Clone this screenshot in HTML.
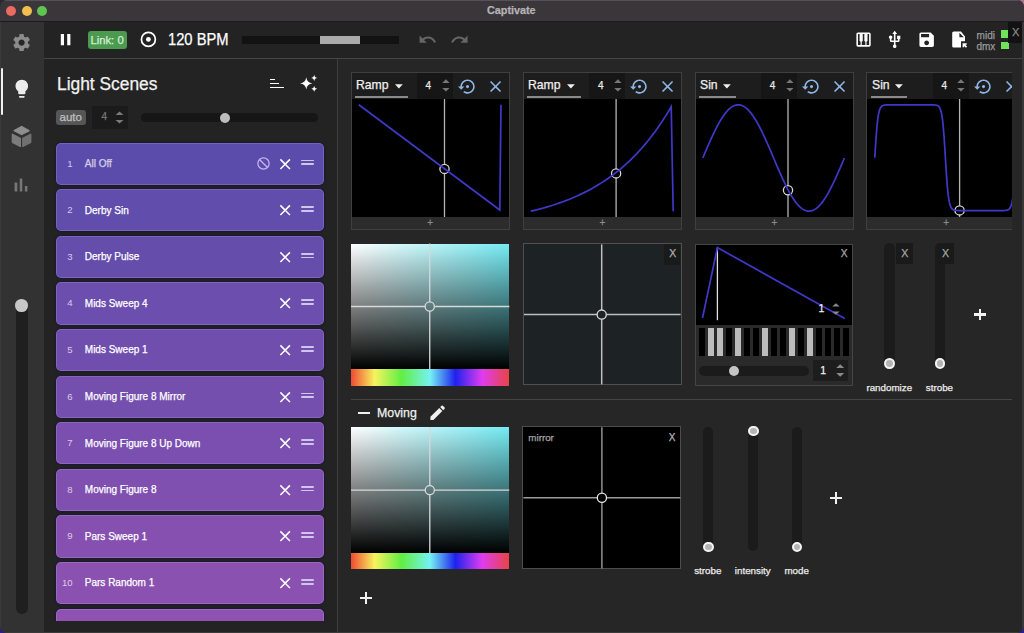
<!DOCTYPE html>
<html><head><meta charset="utf-8">
<style>
*{box-sizing:border-box;margin:0;padding:0}
html,body{width:1024px;height:633px;overflow:hidden;background:#2a1d6e}
body{font-family:"Liberation Sans",sans-serif;position:relative;color:#fff}
.a{position:absolute}
svg.a{overflow:visible}
#win{position:absolute;left:0;top:0;width:1024px;height:633px;background:#262626;border-radius:7px;overflow:hidden}
#title{left:0;top:0;width:1024px;height:22px;background:#3a363a}
.tl{width:10px;height:10px;border-radius:50%;top:5.6px}
#side{left:0;top:22px;width:44px;height:611px;background:#323232}
#toolbar{left:44px;top:22px;width:980px;height:36px;background:#232323}
#tbline{left:44px;top:58px;width:980px;height:1px;background:#454545}
#left{left:44px;top:59px;width:293px;height:574px;background:#232323}
#vline{left:337px;top:59px;width:1px;height:574px;background:#3d3d3d}
#list{position:absolute;left:0;top:0;width:337px;height:620.5px;overflow:hidden}
.card{position:absolute;left:56px;width:268.3px;height:42.3px;border-radius:5px;box-shadow:inset 0 0 0 1px rgba(230,225,255,.17),0 0 2px 1px rgba(20,12,70,.45)}
.num{position:absolute;left:0;width:16.6px;text-align:right;top:16px;font-size:9.6px;line-height:1;color:rgba(255,255,255,.72)}
.nm{position:absolute;left:28.8px;top:16.5px;font-size:10px;line-height:1;color:#fff;white-space:nowrap}
.blk{position:absolute;left:200px;top:13.4px;width:15px;height:15px}
.cls{position:absolute;left:219.9px;top:12px;width:18.3px;height:18.3px}
.dr{position:absolute;left:244.9px;width:13.5px;height:1.8px;background:#cfc5ee;border-radius:1px}
.txt{white-space:nowrap;line-height:1}
.nm,.txt{-webkit-text-stroke:0.25px currentColor}
#rclip{position:absolute;left:338px;top:59px;width:674px;height:574px;overflow:hidden}
#rin{position:absolute;left:-338px;top:-59px;width:1024px;height:633px}
.wp{position:absolute;top:71.8px;width:159.3px;height:157.8px;border:1px solid #3f3f3f}
</style></head><body>
<div class="a" style="left:0;top:0;width:20px;height:20px;background:#2a2a2e"></div>
<div class="a" style="left:1004px;top:0;width:20px;height:20px;background:#b07090"></div>
<div class="a" style="left:0;top:613px;width:20px;height:20px;background:#2c1c90"></div>
<div class="a" style="left:1004px;top:613px;width:20px;height:20px;background:#2a1aa0"></div>
<div id="win">
  <div id="title" class="a"></div>
  <div class="a" style="left:0;top:0;width:1024px;height:1px;background:#55505a"></div>
  <div class="a" style="left:0;top:21px;width:1024px;height:1px;background:#1c1c1c"></div>
  <div class="a tl" style="left:5.6px;background:#ec6a5f"></div>
  <div class="a tl" style="left:21.6px;background:#f3bd4f"></div>
  <div class="a tl" style="left:37px;background:#60c453"></div>
  <div class="a txt" style="left:487px;top:5px;font-size:10.8px;font-weight:bold;color:#b5b1b5">Captivate</div>

  <div id="side" class="a"></div>
  <div id="toolbar" class="a"></div>
  <div id="tbline" class="a"></div>
  <div id="left" class="a"></div>
  <div id="vline" class="a"></div>

  <!-- sidebar icons -->
  <svg class="a" style="left:11.1px;top:31.6px;width:21.2px;height:21.2px" viewBox="0 0 24 24"><path fill="#8b8b8b" d="M19.14 12.94c.04-.3.06-.61.06-.94 0-.32-.02-.64-.07-.94l2.03-1.58c.18-.14.23-.41.12-.61l-1.92-3.32c-.12-.22-.37-.29-.59-.22l-2.39.96c-.5-.38-1.03-.7-1.62-.94l-.36-2.540c-.04-.24-.24-.41-.48-.41h-3.84c-.24 0-.43.17-.47.41l-.36 2.54c-.59.24-1.130.57-1.62.94l-2.39-.96c-.22-.08-.47 0-.59.22L2.74 8.87c-.12.21-.08.47.12.61l2.03 1.58c-.05.3-.09.63-.09.94s.02.64.07.94l-2.03 1.58c-.18.14-.23.41-.12.61l1.92 3.32c.12.22.37.29.59.22l2.39-.96c.5.38 1.03.7 1.62.94l.36 2.54c.05.24.24.41.48.41h3.84c.24 0 .44-.17.47-.41l.36-2.54c.59-.24 1.13-.56 1.62-.94l2.39.96c.22.08.47 0 .59-.22l1.92-3.32c.12-.22.07-.47-.12-.61l-2.01-1.58zM12 15.6c-1.98 0-3.6-1.62-3.6-3.6s1.62-3.6 3.6-3.6 3.6 1.62 3.6 3.6-1.62 3.6-3.6 3.6z"/></svg>
  <div class="a" style="left:19px;top:39.6px;width:5.4px;height:5.4px;background:#262626;border-radius:50%"></div>
  <div class="a" style="left:1px;top:68.4px;width:2.2px;height:47px;background:#f0f0f0;border-radius:1px"></div>
  <svg class="a" style="left:10.9px;top:78px;width:21.6px;height:21.6px" viewBox="0 0 24 24"><path fill="#ececec" d="M9 21c0 .55.45 1 1 1h4c.55 0 1-.45 1-1v-1H9v1zm3-19C8.14 2 5 5.14 5 9c0 2.38 1.19 4.47 3 5.74V17c0 .55.45 1 1 1h6c.55 0 1-.45 1-1v-2.26c1.81-1.27 3-3.36 3-5.74 0-3.86-3.14-7-7-7z"/></svg>
  <svg class="a" style="left:0;top:120px;width:44px;height:34px" viewBox="0 120 44 34">
    <path d="M14.3 130.6 L21.6 126.6 L28.9 130.7 L21.6 134.4 Z" fill="#8e8e8e" stroke="#8e8e8e" stroke-width="1.6" stroke-linejoin="round"/>
    <path d="M12.4 134.3 L20.3 138.3 L20.3 146.4 L12.4 142.3 Z" fill="#7b7b7b" stroke="#7b7b7b" stroke-width="1.4" stroke-linejoin="round"/>
    <path d="M30.7 134.3 L22.8 138.3 L22.8 146.4 L30.7 142.3 Z" fill="#717171" stroke="#717171" stroke-width="1.4" stroke-linejoin="round"/>
  </svg>
  <svg class="a" style="left:10.4px;top:173.8px;width:22px;height:22px" viewBox="0 0 24 24"><path fill="#767676" d="M5 9.2h3V19H5zM10.6 5h2.8v14h-2.8zm5.6 8H19v6h-2.8z"/></svg>
  <div class="a" style="left:15.8px;top:305px;width:11.8px;height:309px;background:#1f1f1f;border-radius:6px"></div>
  <div class="a" style="left:15.3px;top:299.4px;width:12.6px;height:12.6px;background:#c8c8c8;border-radius:50%"></div>

  <!-- toolbar -->
  <svg class="a" style="left:56.2px;top:30px;width:19.2px;height:19.2px" viewBox="0 0 24 24"><path fill="#fff" d="M6 19h4V5H6v14zm8-14v14h4V5h-4z"/></svg>
  <div class="a" style="left:88px;top:31.1px;width:38.5px;height:17.6px;background:#4b9a50;border-radius:3px"></div>
  <div class="a txt" style="left:90.4px;top:34.5px;font-size:11.3px;color:#d4efd2">Link: 0</div>
  <svg class="a" style="left:138px;top:29.3px;width:21px;height:21px" viewBox="138 29.3 21 21"><circle cx="148.4" cy="39.7" r="6.95" fill="none" stroke="#fff" stroke-width="1.75"/><circle cx="148.4" cy="39.7" r="2.4" fill="#fff"/></svg>
  <div class="a txt" style="left:168px;top:32.4px;font-size:16px;color:#fff;transform:scaleX(0.92);transform-origin:0 0">120 BPM</div>
  <div class="a" style="left:241.5px;top:36px;width:157.5px;height:8px;background:#121212"></div>
  <div class="a" style="left:320.3px;top:36px;width:39.6px;height:8px;background:#ababab"></div>
  <svg class="a" style="left:418.4px;top:30.3px;width:19.2px;height:19.2px" viewBox="0 0 24 24"><path fill="#666" d="M12.5 8c-2.65 0-5.05.99-6.9 2.6L2 7v9h9l-3.62-3.62c1.39-1.16 3.16-1.88 5.12-1.88 3.54 0 6.55 2.31 7.6 5.5l2.37-.78C21.08 11.03 17.150 8 12.5 8z"/></svg>
  <svg class="a" style="left:449.8px;top:30.3px;width:19.2px;height:19.2px" viewBox="0 0 24 24"><path fill="#666" d="M18.4 10.6C16.55 8.99 14.15 8 11.5 8c-4.65 0-8.58 3.03-9.96 7.22L3.9 16c1.05-3.19 4.05-5.5 7.6-5.5 1.95 0 3.73.72 5.12 1.88L13 16h9V7l-3.6 3.6z"/></svg>

  <svg class="a" style="left:853.9px;top:30.3px;width:19.1px;height:19.1px" viewBox="0 0 24 24"><path fill="#fff" d="M19,3H5C3.9,3,3,3.9,3,5v14c0,1.1,0.9,2,2,2h14c1.1,0,2-0.9,2-2V5C21,3.9,20.1,3,19,3z M14,14.5h0.25V19h-4.5v-4.5H10c0.55,0,1-0.45,1-1V5h2v8.5C13,14.05,13.45,14.5,14,14.5z M5,5h2v8.5c0,0.55,0.45,1,1,1h0.25V19H5V5z M19,19h-3.25v-4.5H16c0.55,0,1-0.45,1-1V5h2V19z"/></svg>
  <svg class="a" style="left:884.9px;top:30.2px;width:19.4px;height:19.4px" viewBox="0 0 24 24"><path fill="#fff" d="M15 7v4h1v2h-3V5h2l-3-4-3 4h2v8H8v-2.07c.7-.37 1.2-1.08 1.2-1.93 0-1.21-.99-2.2-2.2-2.2-1.21 0-2.2.99-2.2 2.2 0 .85.5 1.56 1.2 1.93V13c0 1.11.89 2 2 2h3v3.05c-.71.37-1.2 1.1-1.2 1.95 0 1.22.99 2.2 2.2 2.2 1.21 0 2.2-.98 2.2-2.2 0-.85-.49-1.58-1.2-1.95V15h3c1.11 0 2-.89 2-2v-2h1V7h-4z"/></svg>
  <svg class="a" style="left:916.9px;top:30.3px;width:19.3px;height:19.3px" viewBox="0 0 24 24"><path fill="#fff" d="M17 3H5c-1.11 0-2 .9-2 2v14c0 1.1.89 2 2 2h14c1.1 0 2-.9 2-2V7l-4-4zm-5 16c-1.66 0-3-1.34-3-3s1.34-3 3-3 3 1.34 3 3-1.34 3-3 3zm3-10H5V5h10v4z"/></svg>
  <svg class="a" style="left:948.5px;top:30.4px;width:19.2px;height:19.2px" viewBox="0 0 24 24"><path fill="#fff" d="M15,2H6C4.9,2,4,2.9,4,4v16c0,1.1,0.89,2,1.99,2H15v-8h5V8L15,2z M13,9V3.5L18.5,9H13z M17,21.66V16.5h5.16v2h-1.76l2.24,2.24l-1.41,1.41l-2.24-2.24v1.75H17z"/></svg>
  <div class="a txt" style="left:976.6px;top:30.8px;font-size:10px;color:#9a9a9a">midi</div>
  <div class="a txt" style="left:976.4px;top:41.6px;font-size:10px;color:#9a9a9a">dmx</div>
  <div class="a" style="left:1001px;top:30.4px;width:7px;height:7.4px;background:#6fe35a"></div>
  <div class="a" style="left:1001px;top:42px;width:8px;height:7px;background:#6fe35a"></div>
  <div class="a" style="left:1008px;top:22px;width:16px;height:20.5px;background:#121212"></div>
  <div class="a txt" style="left:1012px;top:27px;font-size:11px;color:#8a8a8a">X</div>

  <!-- left panel header -->
  <div class="a txt" style="left:56.6px;top:74.5px;font-size:18.3px;color:#f2f2f2;transform:scaleX(0.95);transform-origin:0 0">Light Scenes</div>
  <div class="a" style="left:270px;top:78.9px;width:4.8px;height:1.5px;background:#fff"></div>
  <div class="a" style="left:270px;top:82.6px;width:9.4px;height:1.5px;background:#fff"></div>
  <div class="a" style="left:270px;top:86.7px;width:14.2px;height:1.5px;background:#fff"></div>
  <svg class="a" style="left:298px;top:72px;width:22px;height:22px" viewBox="298 72 22 22">
    <path fill="#fff" d="M306.25 77.2 Q306.9 82.6 312.4 83.3 Q306.9 84 306.25 89.5 Q305.6 84 300.1 83.3 Q305.6 82.6 306.25 77.2Z"/>
    <path fill="#fff" d="M314.2 75.1 Q314.5 77.7 317.1 78 Q314.5 78.3 314.2 80.9 Q313.9 78.3 311.3 78 Q313.9 77.7 314.2 75.1Z"/>
    <path fill="#fff" d="M314.2 85.9 Q314.5 88.5 317.1 88.8 Q314.5 89.1 314.2 91.7 Q313.9 89.1 311.3 88.8 Q313.9 88.5 314.2 85.9Z"/>
  </svg>
  <div class="a" style="left:56.1px;top:110px;width:29.8px;height:14.5px;background:#565656;border-radius:3px"></div>
  <div class="a txt" style="left:59.5px;top:112px;font-size:11.5px;color:#c0c0c0">auto</div>
  <div class="a" style="left:92.3px;top:105.7px;width:36.1px;height:23.1px;background:#1b1b1b"></div>
  <div class="a txt" style="left:101.5px;top:112.2px;font-size:10px;color:#777">4</div>
  <svg class="a" style="left:114.5px;top:111px;width:9px;height:13px" viewBox="0 0 9 13"><path d="M0.5 4 L4.5 0.5 L8.5 4Z M0.5 9 L4.5 12.5 L8.5 9Z" fill="#7a7a7a"/></svg>
  <div class="a" style="left:140.8px;top:112.9px;width:177.2px;height:9.3px;background:#161616;border-radius:5px"></div>
  <div class="a" style="left:220px;top:112.5px;width:10px;height:10px;background:#bdbdbd;border-radius:50%"></div>

  <div id="list">
<div class="card" style="top:142.50px;background:#5b4cab"><div class="num">1</div><div class="nm" style="opacity:.72">All Off</div><svg class="blk" viewBox="0 0 24 24"><circle cx="12" cy="12" r="9" fill="none" stroke="#c4b8ee" stroke-width="2"/><path d="M5.6 5.6L18.4 18.4" stroke="#c4b8ee" stroke-width="2"/></svg><svg class="cls" viewBox="0 0 24 24"><path d="M19 6.41L17.59 5 12 10.59 6.41 5 5 6.41 10.59 12 5 17.59 6.41 19 12 13.41 17.59 19 19 17.59 13.41 12z" fill="#fff"/></svg><div class="dr" style="top:17.2px"></div><div class="dr" style="top:20.9px"></div></div>
<div class="card" style="top:189.10px;background:#604dac"><div class="num">2</div><div class="nm">Derby Sin</div><svg class="cls" viewBox="0 0 24 24"><path d="M19 6.41L17.59 5 12 10.59 6.41 5 5 6.41 10.59 12 5 17.59 6.41 19 12 13.41 17.59 19 19 17.59 13.41 12z" fill="#fff"/></svg><div class="dr" style="top:17.2px"></div><div class="dr" style="top:20.9px"></div></div>
<div class="card" style="top:235.70px;background:#654dac"><div class="num">3</div><div class="nm">Derby Pulse</div><svg class="cls" viewBox="0 0 24 24"><path d="M19 6.41L17.59 5 12 10.59 6.41 5 5 6.41 10.59 12 5 17.59 6.41 19 12 13.41 17.59 19 19 17.59 13.41 12z" fill="#fff"/></svg><div class="dr" style="top:17.2px"></div><div class="dr" style="top:20.9px"></div></div>
<div class="card" style="top:282.30px;background:#6b4ead"><div class="num">4</div><div class="nm">Mids Sweep 4</div><svg class="cls" viewBox="0 0 24 24"><path d="M19 6.41L17.59 5 12 10.59 6.41 5 5 6.41 10.59 12 5 17.59 6.41 19 12 13.41 17.59 19 19 17.59 13.41 12z" fill="#fff"/></svg><div class="dr" style="top:17.2px"></div><div class="dr" style="top:20.9px"></div></div>
<div class="card" style="top:328.90px;background:#704eae"><div class="num">5</div><div class="nm">Mids Sweep 1</div><svg class="cls" viewBox="0 0 24 24"><path d="M19 6.41L17.59 5 12 10.59 6.41 5 5 6.41 10.59 12 5 17.59 6.41 19 12 13.41 17.59 19 19 17.59 13.41 12z" fill="#fff"/></svg><div class="dr" style="top:17.2px"></div><div class="dr" style="top:20.9px"></div></div>
<div class="card" style="top:375.50px;background:#754fae"><div class="num">6</div><div class="nm">Moving Figure 8 Mirror</div><svg class="cls" viewBox="0 0 24 24"><path d="M19 6.41L17.59 5 12 10.59 6.41 5 5 6.41 10.59 12 5 17.59 6.41 19 12 13.41 17.59 19 19 17.59 13.41 12z" fill="#fff"/></svg><div class="dr" style="top:17.2px"></div><div class="dr" style="top:20.9px"></div></div>
<div class="card" style="top:422.10px;background:#7a4faf"><div class="num">7</div><div class="nm">Moving Figure 8 Up Down</div><svg class="cls" viewBox="0 0 24 24"><path d="M19 6.41L17.59 5 12 10.59 6.41 5 5 6.41 10.59 12 5 17.59 6.41 19 12 13.41 17.59 19 19 17.59 13.41 12z" fill="#fff"/></svg><div class="dr" style="top:17.2px"></div><div class="dr" style="top:20.9px"></div></div>
<div class="card" style="top:468.70px;background:#8050b0"><div class="num">8</div><div class="nm">Moving Figure 8</div><svg class="cls" viewBox="0 0 24 24"><path d="M19 6.41L17.59 5 12 10.59 6.41 5 5 6.41 10.59 12 5 17.59 6.41 19 12 13.41 17.59 19 19 17.59 13.41 12z" fill="#fff"/></svg><div class="dr" style="top:17.2px"></div><div class="dr" style="top:20.9px"></div></div>
<div class="card" style="top:515.30px;background:#8550b0"><div class="num">9</div><div class="nm">Pars Sweep 1</div><svg class="cls" viewBox="0 0 24 24"><path d="M19 6.41L17.59 5 12 10.59 6.41 5 5 6.41 10.59 12 5 17.59 6.41 19 12 13.41 17.59 19 19 17.59 13.41 12z" fill="#fff"/></svg><div class="dr" style="top:17.2px"></div><div class="dr" style="top:20.9px"></div></div>
<div class="card" style="top:561.90px;background:#8a51b1"><div class="num">10</div><div class="nm">Pars Random 1</div><svg class="cls" viewBox="0 0 24 24"><path d="M19 6.41L17.59 5 12 10.59 6.41 5 5 6.41 10.59 12 5 17.59 6.41 19 12 13.41 17.59 19 19 17.59 13.41 12z" fill="#fff"/></svg><div class="dr" style="top:17.2px"></div><div class="dr" style="top:20.9px"></div></div>
<div class="card" style="top:608.50px;background:#8f52b2"></div>
  </div>
  <div class="a" style="left:0;top:632px;width:1024px;height:1px;background:#3a3a3a"></div>
  <div class="a" style="left:1022.4px;top:22px;width:1.2px;height:611px;background:#383838"></div>
  <div class="a" style="left:0;top:22px;width:1px;height:611px;background:#3a3a3a"></div>
  <div id="rclip">
<div id="rin">
<div class="wp" style="left:350.5px"></div>
<div class="a" style="left:351.5px;top:73px;width:157px;height:26px;background:#1d1d1d"></div>
<div class="a" style="left:416.9px;top:73px;width:36px;height:26px;background:#161616"></div>
<div class="a txt" style="left:355.7px;top:78.5px;font-size:12.6px;color:#f0f0f0;transform:scaleX(0.97);transform-origin:0 0">Ramp</div>
<svg class="a" style="left:395.0px;top:83.6px;width:8px;height:5px" viewBox="0 0 8 5"><path d="M0 0.2H7.8L3.9 4.6Z" fill="#f0f0f0"/></svg>
<div class="a" style="left:355.0px;top:96px;width:53.3px;height:1.5px;background:#8a8a8a"></div>
<div class="a txt" style="left:425.6px;top:80.8px;font-size:10px;color:#e8e8e8">4</div>
<svg class="a" style="left:441.5px;top:79px;width:8px;height:13px" viewBox="0 0 8 13"><path d="M0.2 3.9 L3.9 0.3 L7.6 3.9Z M0.2 8.9 L3.9 12.6 L7.6 8.9Z" fill="#777"/></svg>
<svg class="a" style="left:457.9px;top:77px;width:19.1px;height:19.1px" viewBox="0 0 24 24"><path fill="#8db6e6" d="M14 12c0-1.1-.9-2-2-2s-2 .9-2 2 .9 2 2 2 2-.9 2-2zm-2-9c-4.97 0-9 4.03-9 9H0l4 4 4-4H5c0-3.87 3.13-7 7-7s7 3.13 7 7-3.13 7-7 7c-1.51 0-2.91-.49-4.06-1.3l-1.42 1.44C8.04 20.3 9.94 21 12 21c4.97 0 9-4.03 9-9s-4.03-9-9-9z"/></svg>
<svg class="a" style="left:485.8px;top:76.5px;width:19.1px;height:19.1px" viewBox="0 0 24 24"><path fill="#8db6e6" d="M19 6.41L17.59 5 12 10.59 6.41 5 5 6.41 10.59 12 5 17.59 6.41 19 12 13.41 17.59 19 19 17.59 13.41 12z"/></svg>
<div class="a" style="left:351.5px;top:99px;width:157px;height:118px;background:#000"></div>
<div class="a" style="left:351.5px;top:217px;width:157px;height:12px;background:#2c2c2c"></div>
<div class="a txt" style="left:427.3px;top:217.6px;font-size:10px;color:#8a8a8a">+</div>
<div class="wp" style="left:522.8px"></div>
<div class="a" style="left:523.8px;top:73px;width:157px;height:26px;background:#1d1d1d"></div>
<div class="a" style="left:589.1999999999999px;top:73px;width:36px;height:26px;background:#161616"></div>
<div class="a txt" style="left:528.0px;top:78.5px;font-size:12.6px;color:#f0f0f0;transform:scaleX(0.97);transform-origin:0 0">Ramp</div>
<svg class="a" style="left:567.3px;top:83.6px;width:8px;height:5px" viewBox="0 0 8 5"><path d="M0 0.2H7.8L3.9 4.6Z" fill="#f0f0f0"/></svg>
<div class="a" style="left:527.3px;top:96px;width:53.3px;height:1.5px;background:#8a8a8a"></div>
<div class="a txt" style="left:597.9px;top:80.8px;font-size:10px;color:#e8e8e8">4</div>
<svg class="a" style="left:613.8px;top:79px;width:8px;height:13px" viewBox="0 0 8 13"><path d="M0.2 3.9 L3.9 0.3 L7.6 3.9Z M0.2 8.9 L3.9 12.6 L7.6 8.9Z" fill="#777"/></svg>
<svg class="a" style="left:630.1999999999999px;top:77px;width:19.1px;height:19.1px" viewBox="0 0 24 24"><path fill="#8db6e6" d="M14 12c0-1.1-.9-2-2-2s-2 .9-2 2 .9 2 2 2 2-.9 2-2zm-2-9c-4.97 0-9 4.03-9 9H0l4 4 4-4H5c0-3.87 3.13-7 7-7s7 3.13 7 7-3.13 7-7 7c-1.51 0-2.91-.49-4.06-1.3l-1.42 1.44C8.04 20.3 9.94 21 12 21c4.97 0 9-4.03 9-9s-4.03-9-9-9z"/></svg>
<svg class="a" style="left:658.0999999999999px;top:76.5px;width:19.1px;height:19.1px" viewBox="0 0 24 24"><path fill="#8db6e6" d="M19 6.41L17.59 5 12 10.59 6.41 5 5 6.41 10.59 12 5 17.59 6.41 19 12 13.41 17.59 19 19 17.59 13.41 12z"/></svg>
<div class="a" style="left:523.8px;top:99px;width:157px;height:118px;background:#000"></div>
<div class="a" style="left:523.8px;top:217px;width:157px;height:12px;background:#2c2c2c"></div>
<div class="a txt" style="left:599.5999999999999px;top:217.6px;font-size:10px;color:#8a8a8a">+</div>
<div class="wp" style="left:694.6px"></div>
<div class="a" style="left:695.6px;top:73px;width:157px;height:26px;background:#1d1d1d"></div>
<div class="a" style="left:761.0px;top:73px;width:36px;height:26px;background:#161616"></div>
<div class="a txt" style="left:699.8000000000001px;top:78.5px;font-size:12.6px;color:#f0f0f0;transform:scaleX(0.97);transform-origin:0 0">Sin</div>
<svg class="a" style="left:723.0px;top:83.6px;width:8px;height:5px" viewBox="0 0 8 5"><path d="M0 0.2H7.8L3.9 4.6Z" fill="#f0f0f0"/></svg>
<div class="a" style="left:699.1px;top:96px;width:36.6px;height:1.5px;background:#8a8a8a"></div>
<div class="a txt" style="left:769.7px;top:80.8px;font-size:10px;color:#e8e8e8">4</div>
<svg class="a" style="left:785.6px;top:79px;width:8px;height:13px" viewBox="0 0 8 13"><path d="M0.2 3.9 L3.9 0.3 L7.6 3.9Z M0.2 8.9 L3.9 12.6 L7.6 8.9Z" fill="#777"/></svg>
<svg class="a" style="left:802.0px;top:77px;width:19.1px;height:19.1px" viewBox="0 0 24 24"><path fill="#8db6e6" d="M14 12c0-1.1-.9-2-2-2s-2 .9-2 2 .9 2 2 2 2-.9 2-2zm-2-9c-4.97 0-9 4.03-9 9H0l4 4 4-4H5c0-3.87 3.13-7 7-7s7 3.13 7 7-3.13 7-7 7c-1.51 0-2.91-.49-4.06-1.3l-1.42 1.44C8.04 20.3 9.94 21 12 21c4.97 0 9-4.03 9-9s-4.03-9-9-9z"/></svg>
<svg class="a" style="left:829.9000000000001px;top:76.5px;width:19.1px;height:19.1px" viewBox="0 0 24 24"><path fill="#8db6e6" d="M19 6.41L17.59 5 12 10.59 6.41 5 5 6.41 10.59 12 5 17.59 6.41 19 12 13.41 17.59 19 19 17.59 13.41 12z"/></svg>
<div class="a" style="left:695.6px;top:99px;width:157px;height:118px;background:#000"></div>
<div class="a" style="left:695.6px;top:217px;width:157px;height:12px;background:#2c2c2c"></div>
<div class="a txt" style="left:771.4px;top:217.6px;font-size:10px;color:#8a8a8a">+</div>
<div class="wp" style="left:866.4px"></div>
<div class="a" style="left:867.4px;top:73px;width:157px;height:26px;background:#1d1d1d"></div>
<div class="a" style="left:932.8px;top:73px;width:36px;height:26px;background:#161616"></div>
<div class="a txt" style="left:871.6px;top:78.5px;font-size:12.6px;color:#f0f0f0;transform:scaleX(0.97);transform-origin:0 0">Sin</div>
<svg class="a" style="left:894.8px;top:83.6px;width:8px;height:5px" viewBox="0 0 8 5"><path d="M0 0.2H7.8L3.9 4.6Z" fill="#f0f0f0"/></svg>
<div class="a" style="left:870.9px;top:96px;width:36.6px;height:1.5px;background:#8a8a8a"></div>
<div class="a txt" style="left:941.5px;top:80.8px;font-size:10px;color:#e8e8e8">4</div>
<svg class="a" style="left:957.4px;top:79px;width:8px;height:13px" viewBox="0 0 8 13"><path d="M0.2 3.9 L3.9 0.3 L7.6 3.9Z M0.2 8.9 L3.9 12.6 L7.6 8.9Z" fill="#777"/></svg>
<svg class="a" style="left:973.8px;top:77px;width:19.1px;height:19.1px" viewBox="0 0 24 24"><path fill="#8db6e6" d="M14 12c0-1.1-.9-2-2-2s-2 .9-2 2 .9 2 2 2 2-.9 2-2zm-2-9c-4.97 0-9 4.03-9 9H0l4 4 4-4H5c0-3.87 3.13-7 7-7s7 3.13 7 7-3.13 7-7 7c-1.51 0-2.91-.49-4.06-1.3l-1.42 1.44C8.04 20.3 9.94 21 12 21c4.97 0 9-4.03 9-9s-4.03-9-9-9z"/></svg>
<svg class="a" style="left:1001.7px;top:76.5px;width:19.1px;height:19.1px" viewBox="0 0 24 24"><path fill="#8db6e6" d="M19 6.41L17.59 5 12 10.59 6.41 5 5 6.41 10.59 12 5 17.59 6.41 19 12 13.41 17.59 19 19 17.59 13.41 12z"/></svg>
<div class="a" style="left:867.4px;top:99px;width:157px;height:118px;background:#000"></div>
<div class="a" style="left:867.4px;top:217px;width:157px;height:12px;background:#2c2c2c"></div>
<div class="a txt" style="left:943.1999999999999px;top:217.6px;font-size:10px;color:#8a8a8a">+</div>
<svg class="a" style="left:0;top:0;width:1024px;height:633px" viewBox="0 0 1024 633">
<line x1="959.6" y1="99" x2="959.6" y2="205.8" stroke="#b4b4b4" stroke-width="1.3"/><line x1="959.6" y1="215.0" x2="959.6" y2="217" stroke="#b4b4b4" stroke-width="1.3"/><circle cx="959.6" cy="210.4" r="4.6" fill="none" stroke="#d8d8d8" stroke-width="1.3"/>
<line x1="788" y1="99" x2="788" y2="185.6" stroke="#b4b4b4" stroke-width="1.3"/><line x1="788" y1="194.79999999999998" x2="788" y2="217" stroke="#b4b4b4" stroke-width="1.3"/><circle cx="788" cy="190.2" r="4.6" fill="none" stroke="#d8d8d8" stroke-width="1.3"/>
<line x1="616.1" y1="99" x2="616.1" y2="168.8" stroke="#b4b4b4" stroke-width="1.3"/><line x1="616.1" y1="178.0" x2="616.1" y2="217" stroke="#b4b4b4" stroke-width="1.3"/><circle cx="616.1" cy="173.4" r="4.6" fill="none" stroke="#d8d8d8" stroke-width="1.3"/>
<line x1="444.5" y1="99" x2="444.5" y2="164.3" stroke="#b4b4b4" stroke-width="1.3"/><line x1="444.5" y1="173.5" x2="444.5" y2="217" stroke="#b4b4b4" stroke-width="1.3"/><circle cx="444.5" cy="168.9" r="4.6" fill="none" stroke="#d8d8d8" stroke-width="1.3"/>
<path d="M358.8 104.8 L499.8 210 L501 104.8" fill="none" stroke="#4038c8" stroke-width="1.7" stroke-linejoin="miter"/>
<path d="M530.80 211.20 L533.14 210.65 L535.48 210.07 L537.82 209.48 L540.16 208.87 L542.50 208.24 L544.84 207.58 L547.18 206.91 L549.52 206.21 L551.86 205.48 L554.20 204.74 L556.54 203.96 L558.88 203.16 L561.22 202.34 L563.56 201.48 L565.90 200.60 L568.24 199.69 L570.58 198.74 L572.92 197.77 L575.26 196.76 L577.60 195.71 L579.94 194.63 L582.28 193.52 L584.62 192.37 L586.96 191.17 L589.30 189.94 L591.64 188.67 L593.98 187.35 L596.32 185.99 L598.66 184.58 L601.00 183.12 L603.34 181.62 L605.68 180.06 L608.02 178.45 L610.36 176.79 L612.70 175.07 L615.04 173.29 L617.38 171.45 L619.72 169.55 L622.06 167.58 L624.40 165.55 L626.74 163.45 L629.08 161.28 L631.42 159.03 L633.76 156.71 L636.10 154.31 L638.44 151.83 L640.78 149.26 L643.12 146.61 L645.46 143.86 L647.80 141.03 L650.14 138.09 L652.48 135.06 L654.82 131.93 L657.16 128.69 L659.50 125.34 L661.84 121.87 L664.18 118.29 L666.52 114.59 L668.86 110.76 L671.20 106.80 L673.20 211.20" fill="none" stroke="#4038c8" stroke-width="1.7"/>
<path d="M702.80 158.00 L703.98 155.22 L705.16 152.44 L706.34 149.68 L707.52 146.94 L708.70 144.23 L709.88 141.56 L711.06 138.93 L712.24 136.36 L713.42 133.85 L714.60 131.40 L715.78 129.03 L716.96 126.73 L718.14 124.52 L719.32 122.40 L720.50 120.38 L721.68 118.46 L722.86 116.66 L724.04 114.96 L725.22 113.38 L726.40 111.93 L727.58 110.60 L728.76 109.40 L729.94 108.33 L731.12 107.40 L732.30 106.61 L733.48 105.96 L734.66 105.45 L735.84 105.09 L737.02 104.87 L738.20 104.80 L739.38 104.87 L740.56 105.09 L741.74 105.45 L742.92 105.96 L744.10 106.61 L745.28 107.40 L746.46 108.33 L747.64 109.40 L748.82 110.60 L750.00 111.93 L751.18 113.38 L752.36 114.96 L753.54 116.66 L754.72 118.46 L755.90 120.38 L757.08 122.40 L758.26 124.52 L759.44 126.73 L760.62 129.03 L761.80 131.40 L762.98 133.85 L764.16 136.36 L765.34 138.93 L766.52 141.56 L767.70 144.23 L768.88 146.94 L770.06 149.68 L771.24 152.44 L772.42 155.22 L773.60 158.00 L774.78 160.78 L775.96 163.56 L777.14 166.32 L778.32 169.06 L779.50 171.77 L780.68 174.44 L781.86 177.07 L783.04 179.64 L784.22 182.15 L785.40 184.60 L786.58 186.97 L787.76 189.27 L788.94 191.48 L790.12 193.60 L791.30 195.62 L792.48 197.54 L793.66 199.34 L794.84 201.04 L796.02 202.62 L797.20 204.07 L798.38 205.40 L799.56 206.60 L800.74 207.67 L801.92 208.60 L803.10 209.39 L804.28 210.04 L805.46 210.55 L806.64 210.91 L807.82 211.13 L809.00 211.20 L810.18 211.13 L811.36 210.91 L812.54 210.55 L813.72 210.04 L814.90 209.39 L816.08 208.60 L817.26 207.67 L818.44 206.60 L819.62 205.40 L820.80 204.07 L821.98 202.62 L823.16 201.04 L824.34 199.34 L825.52 197.54 L826.70 195.62 L827.88 193.60 L829.06 191.48 L830.24 189.27 L831.42 186.97 L832.60 184.60 L833.78 182.15 L834.96 179.64 L836.14 177.07 L837.32 174.44 L838.50 171.77 L839.68 169.06 L840.86 166.32 L842.04 163.56 L843.22 160.78 L844.40 158.00" fill="none" stroke="#4038c8" stroke-width="1.7"/>
<path d="M874.80 157.70 L875.39 148.11 L875.98 139.14 L876.56 131.25 L877.15 124.68 L877.74 119.46 L878.33 115.45 L878.92 112.45 L879.51 110.26 L880.09 108.68 L880.68 107.55 L881.27 106.75 L881.86 106.18 L882.45 105.78 L883.04 105.50 L883.62 105.30 L884.21 105.15 L884.80 105.05 L885.39 104.98 L885.98 104.93 L886.57 104.90 L887.15 104.87 L887.74 104.85 L888.33 104.84 L888.92 104.83 L889.51 104.82 L890.10 104.82 L890.68 104.81 L891.27 104.81 L891.86 104.81 L892.45 104.81 L893.04 104.80 L893.63 104.80 L894.21 104.80 L894.80 104.80 L895.39 104.80 L895.98 104.80 L896.57 104.80 L897.16 104.80 L897.75 104.80 L898.33 104.80 L898.92 104.80 L899.51 104.80 L900.10 104.80 L900.69 104.80 L901.27 104.80 L901.86 104.80 L902.45 104.80 L903.04 104.80 L903.63 104.80 L904.22 104.80 L904.80 104.80 L905.39 104.80 L905.98 104.80 L906.57 104.80 L907.16 104.80 L907.75 104.80 L908.33 104.80 L908.92 104.80 L909.51 104.80 L910.10 104.80 L910.69 104.80 L911.28 104.80 L911.87 104.80 L912.45 104.80 L913.04 104.80 L913.63 104.80 L914.22 104.80 L914.81 104.80 L915.39 104.80 L915.98 104.80 L916.57 104.80 L917.16 104.80 L917.75 104.80 L918.34 104.80 L918.92 104.80 L919.51 104.80 L920.10 104.80 L920.69 104.80 L921.28 104.80 L921.87 104.80 L922.45 104.80 L923.04 104.80 L923.63 104.80 L924.22 104.80 L924.81 104.80 L925.40 104.80 L925.99 104.80 L926.57 104.80 L927.16 104.80 L927.75 104.81 L928.34 104.81 L928.93 104.81 L929.51 104.81 L930.10 104.82 L930.69 104.82 L931.28 104.83 L931.87 104.84 L932.46 104.85 L933.04 104.87 L933.63 104.90 L934.22 104.93 L934.81 104.98 L935.40 105.05 L935.99 105.15 L936.57 105.30 L937.16 105.50 L937.75 105.78 L938.34 106.18 L938.93 106.75 L939.52 107.55 L940.11 108.68 L940.69 110.26 L941.28 112.45 L941.87 115.45 L942.46 119.46 L943.05 124.68 L943.63 131.25 L944.22 139.14 L944.81 148.11 L945.40 157.70 L945.99 167.29 L946.58 176.26 L947.16 184.15 L947.75 190.72 L948.34 195.94 L948.93 199.95 L949.52 202.95 L950.11 205.14 L950.69 206.72 L951.28 207.85 L951.87 208.65 L952.46 209.22 L953.05 209.62 L953.64 209.90 L954.23 210.10 L954.81 210.25 L955.40 210.35 L955.99 210.42 L956.58 210.47 L957.17 210.50 L957.75 210.53 L958.34 210.55 L958.93 210.56 L959.52 210.57 L960.11 210.58 L960.70 210.58 L961.28 210.59 L961.87 210.59 L962.46 210.59 L963.05 210.59 L963.64 210.60 L964.23 210.60 L964.81 210.60 L965.40 210.60 L965.99 210.60 L966.58 210.60 L967.17 210.60 L967.76 210.60 L968.35 210.60 L968.93 210.60 L969.52 210.60 L970.11 210.60 L970.70 210.60 L971.29 210.60 L971.88 210.60 L972.46 210.60 L973.05 210.60 L973.64 210.60 L974.23 210.60 L974.82 210.60 L975.40 210.60 L975.99 210.60 L976.58 210.60 L977.17 210.60 L977.76 210.60 L978.35 210.60 L978.93 210.60 L979.52 210.60 L980.11 210.60 L980.70 210.60 L981.29 210.60 L981.88 210.60 L982.47 210.60 L983.05 210.60 L983.64 210.60 L984.23 210.60 L984.82 210.60 L985.41 210.60 L986.00 210.60 L986.58 210.60 L987.17 210.60 L987.76 210.60 L988.35 210.60 L988.94 210.60 L989.52 210.60 L990.11 210.60 L990.70 210.60 L991.29 210.60 L991.88 210.60 L992.47 210.60 L993.05 210.60 L993.64 210.60 L994.23 210.60 L994.82 210.60 L995.41 210.60 L996.00 210.60 L996.59 210.60 L997.17 210.60 L997.76 210.60 L998.35 210.59 L998.94 210.59 L999.53 210.59 L1000.12 210.59 L1000.70 210.58 L1001.29 210.58 L1001.88 210.57 L1002.47 210.56 L1003.06 210.55 L1003.64 210.53 L1004.23 210.50 L1004.82 210.47 L1005.41 210.42 L1006.00 210.35 L1006.59 210.25 L1007.17 210.10 L1007.76 209.90 L1008.35 209.62 L1008.94 209.22 L1009.53 208.65 L1010.12 207.85 L1010.71 206.72 L1011.29 205.14 L1011.88 202.95 L1012.47 199.95 L1013.06 195.94 L1013.65 190.72 L1014.24 184.15 L1014.82 176.26 L1015.41 167.29 L1016.00 157.70" fill="none" stroke="#4038c8" stroke-width="1.7"/>
</svg>
<div class="a" style="left:351px;top:243.5px;width:158.39999999999998px;height:125.69999999999999px;background:linear-gradient(to bottom,rgba(0,0,0,0),#000),linear-gradient(to right,#fff,#74eaf2)"></div>
<div class="a" style="left:351px;top:369.2px;width:158.39999999999998px;height:16.5px;background:linear-gradient(to right,#f04a34 0%,#f6f45e 15%,#62ee44 32%,#74f2f2 50%,#1e22ee 66%,#e03cf0 83%,#e84444 100%)"></div>
<svg class="a" style="left:0;top:0;width:1024px;height:633px" viewBox="0 0 1024 633"><line x1="429.75" y1="243.5" x2="429.75" y2="301.9" stroke="#d8d8d8" stroke-width="1.3"/><line x1="429.75" y1="311.1" x2="429.75" y2="369.2" stroke="#d8d8d8" stroke-width="1.3"/><line x1="351" y1="306.5" x2="425.15" y2="306.5" stroke="#d8d8d8" stroke-width="1.3"/><line x1="434.35" y1="306.5" x2="509.4" y2="306.5" stroke="#d8d8d8" stroke-width="1.3"/><circle cx="429.75" cy="306.5" r="4.6" fill="none" stroke="#d8d8d8" stroke-width="1.3"/></svg>
<div class="a" style="left:351px;top:427px;width:158.3px;height:126px;background:linear-gradient(to bottom,rgba(0,0,0,0),#000),linear-gradient(to right,#fff,#74eaf2)"></div>
<div class="a" style="left:351px;top:553px;width:158.3px;height:16px;background:linear-gradient(to right,#f04a34 0%,#f6f45e 15%,#62ee44 32%,#74f2f2 50%,#1e22ee 66%,#e03cf0 83%,#e84444 100%)"></div>
<svg class="a" style="left:0;top:0;width:1024px;height:633px" viewBox="0 0 1024 633"><line x1="429.8" y1="427" x2="429.8" y2="485.5" stroke="#d8d8d8" stroke-width="1.3"/><line x1="429.8" y1="494.70000000000005" x2="429.8" y2="553" stroke="#d8d8d8" stroke-width="1.3"/><line x1="351" y1="490.1" x2="425.2" y2="490.1" stroke="#d8d8d8" stroke-width="1.3"/><line x1="434.40000000000003" y1="490.1" x2="509.3" y2="490.1" stroke="#d8d8d8" stroke-width="1.3"/><circle cx="429.8" cy="490.1" r="4.6" fill="none" stroke="#d8d8d8" stroke-width="1.3"/></svg>
<div class="a" style="left:523px;top:243.4px;width:158.6px;height:142px;background:#1d2224;border:1px solid #505050"></div>
<svg class="a" style="left:0;top:0;width:1024px;height:633px" viewBox="0 0 1024 633"><line x1="601.7" y1="244.4" x2="601.7" y2="310.0" stroke="#bcc0c0" stroke-width="1.5"/><line x1="601.7" y1="319.20000000000005" x2="601.7" y2="384.4" stroke="#bcc0c0" stroke-width="1.5"/><line x1="524" y1="314.6" x2="597.1" y2="314.6" stroke="#bcc0c0" stroke-width="1.5"/><line x1="606.3000000000001" y1="314.6" x2="680.6" y2="314.6" stroke="#bcc0c0" stroke-width="1.5"/><circle cx="601.7" cy="314.6" r="4.6" fill="none" stroke="#d8dcdc" stroke-width="1.3"/></svg>
<div class="a" style="left:664px;top:244.4px;width:16.4px;height:20.5px;background:#191a1a"></div>
<div class="a txt" style="left:669.3px;top:249px;font-size:10.4px;color:#b0b0b0">X</div>
<div class="a" style="left:694.6px;top:243.6px;width:158px;height:142.2px;background:#2a2a2a;border:1px solid #454545"></div>
<div class="a" style="left:695.6px;top:244.6px;width:156px;height:80px;background:#000"></div>
<svg class="a" style="left:0;top:0;width:1024px;height:633px" viewBox="0 0 1024 633"><line x1="717.4" y1="247.6" x2="717.4" y2="320.2" stroke="#e0e0e0" stroke-width="1.3"/><path d="M702.5 318 L717.4 247.6 L844.7 318.5" fill="none" stroke="#4038c8" stroke-width="1.7"/></svg>
<div class="a txt" style="left:840.8px;top:249.4px;font-size:10.2px;color:#a8a8a8">X</div>
<div class="a txt" style="left:818.4px;top:302.6px;font-size:10.5px;color:#f0f0f0">1</div>
<svg class="a" style="left:832.2px;top:302.5px;width:8px;height:12px" viewBox="0 0 8 12"><path d="M0.2 3.6 L3.9 0.2 L7.6 3.6Z M0.2 8.4 L3.9 11.8 L7.6 8.4Z" fill="#8a8a8a"/></svg>
<div class="a" style="left:699.10px;top:328px;width:5.9px;height:28px;background:#000"></div>
<div class="a" style="left:708.10px;top:328px;width:5.9px;height:28px;background:#bcbcbc"></div>
<div class="a" style="left:717.10px;top:328px;width:5.9px;height:28px;background:#bcbcbc"></div>
<div class="a" style="left:726.10px;top:328px;width:5.9px;height:28px;background:#000"></div>
<div class="a" style="left:735.10px;top:328px;width:5.9px;height:28px;background:#bcbcbc"></div>
<div class="a" style="left:744.10px;top:328px;width:5.9px;height:28px;background:#000"></div>
<div class="a" style="left:753.10px;top:328px;width:5.9px;height:28px;background:#000"></div>
<div class="a" style="left:762.10px;top:328px;width:5.9px;height:28px;background:#bcbcbc"></div>
<div class="a" style="left:771.10px;top:328px;width:5.9px;height:28px;background:#000"></div>
<div class="a" style="left:780.10px;top:328px;width:5.9px;height:28px;background:#000"></div>
<div class="a" style="left:789.10px;top:328px;width:5.9px;height:28px;background:#bcbcbc"></div>
<div class="a" style="left:798.10px;top:328px;width:5.9px;height:28px;background:#000"></div>
<div class="a" style="left:807.10px;top:328px;width:5.9px;height:28px;background:#bcbcbc"></div>
<div class="a" style="left:816.10px;top:328px;width:5.9px;height:28px;background:#000"></div>
<div class="a" style="left:825.10px;top:328px;width:5.9px;height:28px;background:#000"></div>
<div class="a" style="left:834.10px;top:328px;width:5.9px;height:28px;background:#000"></div>
<div class="a" style="left:843.10px;top:328px;width:5.9px;height:28px;background:#000"></div>
<div class="a" style="left:699px;top:365.6px;width:109.7px;height:10.4px;background:#1b1b1b;border-radius:5.2px"></div>
<div class="a" style="left:728.7px;top:366px;width:10px;height:10px;background:#c4c4c4;border-radius:50%"></div>
<div class="a" style="left:812.8px;top:360px;width:35.7px;height:20.6px;background:#1d1d1d"></div>
<div class="a txt" style="left:820.3px;top:365.4px;font-size:10.5px;color:#f2f2f2">1</div>
<svg class="a" style="left:836px;top:363.5px;width:8.4px;height:13px" viewBox="0 0 8.4 13"><path d="M0.2 4 L4.2 0.3 L8.2 4Z M0.2 9 L4.2 12.7 L8.2 9Z" fill="#8a8a8a"/></svg>
<div class="a" style="left:884.40px;top:243.1px;width:10.4px;height:124.9px;background:#1b1b1b;border-radius:5.2px"></div>
<div class="a" style="left:896.1px;top:243.1px;width:17px;height:20.5px;background:#1a1a1a"></div>
<div class="a txt" style="left:901.3000000000001px;top:248px;font-size:10.6px;color:#a8a8a8">X</div>
<div class="a" style="left:884.20px;top:358.20px;width:10.8px;height:10.8px;background:#b4b4b4;border:2px solid #f4f4f4;border-radius:50%"></div>
<div class="a txt" style="left:866.4px;top:382.6px;font-size:9.8px;color:#ececec">randomize</div>
<div class="a" style="left:934.90px;top:243.1px;width:10.4px;height:124.9px;background:#1b1b1b;border-radius:5.2px"></div>
<div class="a" style="left:936.9px;top:243.1px;width:17px;height:20.5px;background:#1a1a1a"></div>
<div class="a txt" style="left:942.1px;top:248px;font-size:10.6px;color:#a8a8a8">X</div>
<div class="a" style="left:934.70px;top:358.20px;width:10.8px;height:10.8px;background:#b4b4b4;border:2px solid #f4f4f4;border-radius:50%"></div>
<div class="a txt" style="left:925.8px;top:382.6px;font-size:9.8px;color:#ececec">strobe</div>
<div class="a" style="left:703.00px;top:426.6px;width:10.4px;height:124.89999999999998px;background:#1b1b1b;border-radius:5.2px"></div>
<div class="a" style="left:702.80px;top:541.50px;width:10.8px;height:10.8px;background:#b4b4b4;border:2px solid #f4f4f4;border-radius:50%"></div>
<div class="a txt" style="left:694.2px;top:565.9px;font-size:9.8px;color:#ececec">strobe</div>
<div class="a" style="left:748.10px;top:426.6px;width:10.4px;height:124.89999999999998px;background:#1b1b1b;border-radius:5.2px"></div>
<div class="a" style="left:747.90px;top:425.70px;width:10.8px;height:10.8px;background:#b4b4b4;border:2px solid #f4f4f4;border-radius:50%"></div>
<div class="a txt" style="left:734.8px;top:565.9px;font-size:9.8px;color:#ececec">intensity</div>
<div class="a" style="left:791.70px;top:426.6px;width:10.4px;height:124.89999999999998px;background:#1b1b1b;border-radius:5.2px"></div>
<div class="a" style="left:791.50px;top:541.50px;width:10.8px;height:10.8px;background:#b4b4b4;border:2px solid #f4f4f4;border-radius:50%"></div>
<div class="a txt" style="left:784.4px;top:565.9px;font-size:9.8px;color:#ececec">mode</div>
<div class="a" style="left:974.05px;top:313.45px;width:11.7px;height:2.1px;background:#f2f2f2"></div>
<div class="a" style="left:978.85px;top:308.65px;width:2.1px;height:11.7px;background:#f2f2f2"></div>
<div class="a" style="left:830.15px;top:496.95px;width:11.7px;height:2.1px;background:#f2f2f2"></div>
<div class="a" style="left:834.95px;top:492.15px;width:2.1px;height:11.7px;background:#f2f2f2"></div>
<div class="a" style="left:360.35px;top:596.95px;width:11.7px;height:2.1px;background:#f2f2f2"></div>
<div class="a" style="left:365.15px;top:592.15px;width:2.1px;height:11.7px;background:#f2f2f2"></div>
<div class="a" style="left:350.5px;top:399px;width:661.5px;height:1.2px;background:#454545"></div>
<div class="a" style="left:358px;top:411.7px;width:11.5px;height:1.9px;background:#f0f0f0"></div>
<div class="a txt" style="left:377.3px;top:406.4px;font-size:13px;color:#f0f0f0;transform:scaleX(0.95);transform-origin:0 0">Moving</div>
<svg class="a" style="left:428.1px;top:403.3px;width:19.3px;height:19.3px" viewBox="0 0 24 24"><path fill="#f0f0f0" d="M3 17.25V21h3.75L17.81 9.94l-3.75-3.75L3 17.25zM20.71 7.04c.39-.39.39-1.02 0-1.41l-2.34-2.34c-.39-.39-1.02-.39-1.41 0l-1.83 1.83 3.75 3.75 1.83-1.83z"/></svg>
<div class="a" style="left:522.4px;top:426.2px;width:159px;height:143.2px;background:#000;border:1px solid #4c4c4c"></div>
<svg class="a" style="left:0;top:0;width:1024px;height:633px" viewBox="0 0 1024 633"><line x1="601.9" y1="427.2" x2="601.9" y2="493.2" stroke="#9c9c9c" stroke-width="1.4"/><line x1="601.9" y1="502.40000000000003" x2="601.9" y2="568.4" stroke="#9c9c9c" stroke-width="1.4"/><line x1="523.4" y1="497.8" x2="597.3" y2="497.8" stroke="#9c9c9c" stroke-width="1.4"/><line x1="606.5" y1="497.8" x2="680.4" y2="497.8" stroke="#9c9c9c" stroke-width="1.4"/><circle cx="601.9" cy="497.8" r="4.6" fill="none" stroke="#e8e8e8" stroke-width="1.3"/></svg>
<div class="a txt" style="left:528.3px;top:432.6px;font-size:9.8px;color:#a4a4a4">mirror</div>
<div class="a txt" style="left:668.8px;top:433px;font-size:10px;color:#b4b4b4">X</div>
</div>
  </div>
</div>
</body></html>
